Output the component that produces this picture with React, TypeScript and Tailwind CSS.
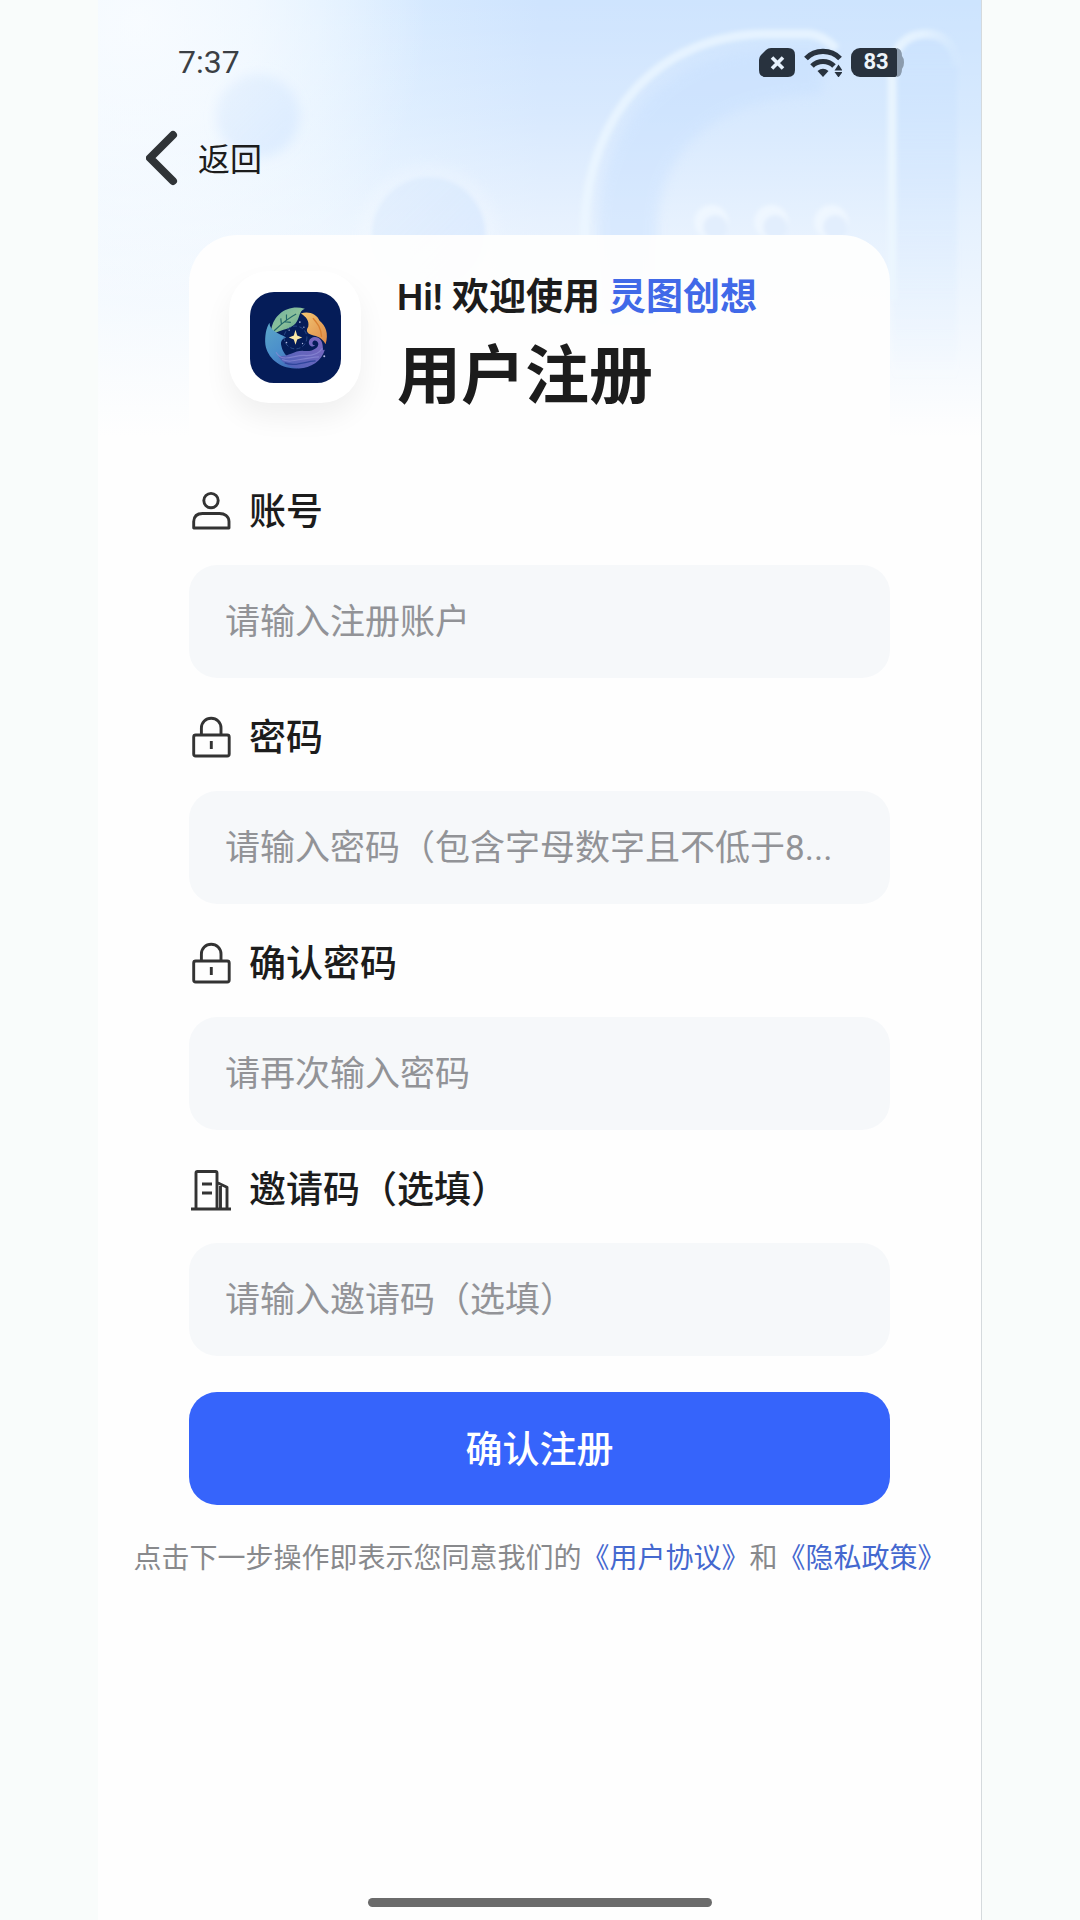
import { useState, type ReactNode } from 'react'

interface Field {
  id: string
  label: string
  placeholder: string
  type: string
  icon: ReactNode
}

const iconProps = {
  viewBox: '0 2 40 40',
  fill: 'none',
  stroke: '#333333',
  strokeWidth: 2.9,
  strokeLinejoin: 'round' as const,
  className: 'h-10 w-10 shrink-0 overflow-visible',
  'aria-hidden': true,
}

function UserIcon() {
  return (
    <svg {...iconProps}>
      <circle cx="20" cy="9.6" r="7.2" />
      <path d="M2.700 37V30.500C3 25 6.500 22.500 11.500 22.500h17C33.500 22.500 37.700 25 38 30.500V37Z" />
    </svg>
  )
}

function LockIcon() {
  return (
    <svg {...iconProps}>
      <rect x="2.700" y="18" width="35.500" height="21" rx="2" />
      <path d="M10.400 18V11a9.800 9.800 0 0 1 19.600 0v7M20.300 24v8" />
    </svg>
  )
}

function BuildingIcon() {
  return (
    <svg {...iconProps}>
      <path d="M0 40h40M5 40V4a1.500 1.500 0 0 1 1.500-1.500h18A1.500 1.500 0 0 1 26 4v36M26 13.500l10 4.700v21.800M29.500 17v22M11 15h10M11 24h10" />
    </svg>
  )
}

const fields: Field[] = [
  { id: 'account', label: '账号', placeholder: '请输入注册账户', type: 'text', icon: <UserIcon /> },
  {
    id: 'password',
    label: '密码',
    placeholder: '请输入密码（包含字母数字且不低于8...',
    type: 'password',
    icon: <LockIcon />,
  },
  { id: 'confirm', label: '确认密码', placeholder: '请再次输入密码', type: 'password', icon: <LockIcon /> },
  {
    id: 'invite',
    label: '邀请码（选填）',
    placeholder: '请输入邀请码（选填）',
    type: 'text',
    icon: <BuildingIcon />,
  },
]

function HeaderArt() {
  return (
    <svg
      className="absolute inset-x-0 top-0 h-[460px] w-full"
      viewBox="0 0 884 460"
      preserveAspectRatio="none"
      aria-hidden="true"
    >
      <defs>
        <linearGradient id="sky" x1="0" y1="0" x2="1" y2="0">
          <stop offset="0" stopColor="#e2f1ff" />
          <stop offset="0.25" stopColor="#dceeff" />
          <stop offset="0.5" stopColor="#cfe4fe" />
          <stop offset="1" stopColor="#cde4fe" />
        </linearGradient>
        <linearGradient id="fade" x1="0" y1="0" x2="0" y2="1">
          <stop offset="0" stopColor="#fefefe" stopOpacity="0" />
          <stop offset="0.25" stopColor="#fefefe" stopOpacity="0.2" />
          <stop offset="0.48" stopColor="#fefefe" stopOpacity="0.5" />
          <stop offset="0.7" stopColor="#fefefe" stopOpacity="0.72" />
          <stop offset="0.95" stopColor="#fefefe" />
        </linearGradient>
        <radialGradient id="corner" gradientUnits="userSpaceOnUse" cx="40" cy="20" r="290">
          <stop offset="0" stopColor="#fdfeff" stopOpacity="0.8" />
          <stop offset="0.4" stopColor="#fdfeff" stopOpacity="0.6" />
          <stop offset="1" stopColor="#fdfeff" stopOpacity="0" />
        </radialGradient>
        <linearGradient id="bubble" x1="0" y1="0" x2="1" y2="1">
          <stop offset="0" stopColor="#cfe3fb" stopOpacity="0.3" />
          <stop offset="1" stopColor="#c5deff" stopOpacity="0.45" />
        </linearGradient>
        <linearGradient id="pill" x1="0" y1="0" x2="0" y2="1">
          <stop offset="0" stopColor="#c9e1ff" stopOpacity="0.5" />
          <stop offset="1" stopColor="#c9e1ff" stopOpacity="0" />
        </linearGradient>
        <linearGradient id="pillEdge" x1="0" y1="0" x2="1" y2="0">
          <stop offset="0" stopColor="#ecf7ff" stopOpacity="0.85" />
          <stop offset="0.5" stopColor="#ecf7ff" stopOpacity="0.7" />
          <stop offset="1" stopColor="#ecf7ff" stopOpacity="0.1" />
        </linearGradient>
        <filter id="soft2" x="-20%" y="-20%" width="140%" height="140%">
          <feGaussianBlur stdDeviation="2" />
        </filter>
        <filter id="soft6" x="-20%" y="-20%" width="140%" height="140%">
          <feGaussianBlur stdDeviation="6" />
        </filter>
      </defs>
      <rect width="884" height="460" fill="url(#sky)" />
      <rect width="884" height="460" fill="url(#fade)" />
      <rect width="884" height="460" fill="url(#corner)" />
      <circle cx="160" cy="116" r="42" fill="url(#bubble)" filter="url(#soft6)" />
      <circle cx="331" cy="234" r="70" fill="#fff" opacity="0.15" filter="url(#soft6)" />
      <circle cx="331" cy="234" r="57" fill="url(#bubble)" filter="url(#soft2)" />
      <path
        d="M500 320V230C500 120 575 50 680 50H725V95C620 95 560 150 560 230V320Z"
        fill="#c4deff"
        opacity="0.4"
        filter="url(#soft6)"
      />
      <path
        d="M487 300V225C491 115 560 35 668 34H712Q726 35 739 49"
        fill="none"
        stroke="#ecf7ff"
        strokeOpacity="0.75"
        strokeWidth="9"
        filter="url(#soft2)"
      />
      <path d="M796 380V64a32 32 0 0 1 64 0V380Z" fill="url(#pill)" filter="url(#soft2)" />
      <path
        d="M795 300V72C795 45 812 34 829 34S858 45 860 66"
        fill="none"
        stroke="url(#pillEdge)"
        strokeWidth="9"
        filter="url(#soft2)"
      />
      {[614, 674, 734].map((x) => (
        <g key={x} filter="url(#soft2)">
          <circle cx={x} cy="222" r="17" fill="#eff7ff" />
          <circle cx={x + 4} cy="227" r="12" fill="#e2eefd" />
        </g>
      ))}
    </svg>
  )
}

function AppLogo() {
  return (
    <svg viewBox="0 0 272 272" className="h-[91px] w-[91px]" role="img" aria-label="灵图创想">
      <defs>
        <linearGradient id="leaf" x1="0" y1="0" x2="1" y2="1">
          <stop offset="0" stopColor="#6fb3a0" />
          <stop offset="0.5" stopColor="#8cc09a" />
          <stop offset="1" stopColor="#4e9a8a" />
        </linearGradient>
        <linearGradient id="flame" x1="0" y1="0" x2="1" y2="1">
          <stop offset="0" stopColor="#f3c673" />
          <stop offset="1" stopColor="#dd8a48" />
        </linearGradient>
        <linearGradient id="water" x1="0" y1="0" x2="0.7" y2="1">
          <stop offset="0" stopColor="#5ba6c8" />
          <stop offset="0.55" stopColor="#4b8fcb" />
          <stop offset="1" stopColor="#3f66b4" />
        </linearGradient>
        <linearGradient id="wave" x1="0" y1="1" x2="1" y2="0">
          <stop offset="0" stopColor="#4a62b8" />
          <stop offset="1" stopColor="#7f68c0" />
        </linearGradient>
      </defs>
      <rect width="272" height="272" rx="72" fill="#051c58" />
      <path d="M64 110C72 68 112 36 164 50C146 56 150 76 136 94C122 110 96 112 76 122C70 122 66 116 64 110Z" fill="url(#leaf)" />
      <path d="M72 116C94 96 108 82 138 66M94 97l-2-18M109 85l0-18M104 89l18 2" fill="none" stroke="#23686a" strokeWidth="3.500" />
      <path
        d="M152 64C176 56 200 66 208 86C226 100 236 124 226 156C218 142 208 134 190 130C170 126 166 116 174 104C178 86 168 74 152 64Z"
        fill="url(#flame)"
      />
      <path d="M188 78C200 92 212 104 214 134" fill="none" stroke="#d98032" strokeWidth="4" />
      <path
        d="M58 92C60 118 84 122 108 136C96 140 90 148 94 162C98 182 112 196 122 200C140 214 158 222 172 222C106 244 54 206 46 158C44 132 48 108 58 92Z"
        fill="url(#water)"
      />
      <path
        d="M84 190C112 198 130 174 160 176C188 180 206 166 204 154C202 144 190 142 187 150C185 157 191 161 195 158C190 168 174 162 176 148C180 132 202 130 212 144C222 160 214 180 224 172C214 208 176 232 138 228C112 222 92 208 84 190Z"
        fill="url(#wave)"
      />
      <path
        d="M78 180C98 216 138 184 168 190C192 190 208 182 216 168M96 202C124 214 148 198 206 194"
        fill="none"
        stroke="#8c8bd6"
        strokeOpacity="0.7"
        strokeWidth="3.500"
      />
      <path d="M104 212C136 224 160 208 196 206" fill="none" stroke="#2f459b" strokeWidth="4" />
      <circle cx="136" cy="136" r="34" fill="none" stroke="#31528f" strokeWidth="2.500" strokeDasharray="12 7" />
      <path d="M136 113L141 130L156 136L141 142L136 158L131 142L116 136L131 130Z" fill="#fbe7a6" />
      <g fill="#b4bce2">
        <circle cx="149" cy="90" r="2.500" />
        <circle cx="161" cy="105" r="2" />
        <circle cx="117" cy="114" r="2" />
        <circle cx="109" cy="151" r="2.500" />
        <circle cx="157" cy="154" r="2" />
        <circle cx="222" cy="192" r="3" />
      </g>
    </svg>
  )
}

function StatusBar() {
  return (
    <div className="flex h-[100px] items-center justify-between pt-6 pr-[77px] pl-20">
      <span className="text-[32px] leading-9 text-[#3b3f44]">7:37</span>
      <div className="flex items-center gap-[9px]">
        <svg viewBox="0 0 36 29" className="h-[29px] w-9" aria-hidden="true">
          <path d="M12 0H29Q36 0 36 7V22Q36 29 29 29H7Q0 29 0 22V12Q0 9 2 7L7 2Q9 0 12 0Z" fill="#28323e" />
          <path d="M13 9.500l11 11M24 9.500l-11 11" stroke="#e6f1fc" strokeWidth="3.600" />
        </svg>
        <svg viewBox="0 0 38 29" className="h-[29px] w-[38px]" aria-hidden="true">
          <path d="M2 10.500C11 1 27 1 36 10.500" fill="none" stroke="#28323e" strokeWidth="5.200" />
          <path d="M8 18C14 12 24 12 30 18" fill="none" stroke="#28323e" strokeWidth="5" />
          <path d="M13.500 23Q19 18.500 24.500 23L19 29Z" fill="#28323e" />
          <path d="M34.500 16.500L38.500 22.500H30.500ZM34.500 29.500L38.500 24H30.500Z" fill="#28323e" />
        </svg>
        <div className="flex items-center">
          <span className="flex h-[29px] w-[46px] items-center justify-center rounded-l-[9px] rounded-r-[2px] bg-[#28323e] pl-1 text-[22px] leading-none font-bold text-[#edf4fb]">
            83
          </span>
          <svg viewBox="0 0 7 29" className="h-[29px] w-[7px]" aria-hidden="true">
            <path d="M0 0Q5 1 5 8Q7 10 7 14.500T5 21Q5 28 0 29Z" fill="#8b9bad" />
          </svg>
        </div>
      </div>
    </div>
  )
}

export default function App() {
  const [values, setValues] = useState<Record<string, string>>({})

  return (
    <div
      lang="zh-CN"
      className="min-h-screen bg-[#f9fcfb] font-[Roboto,'Noto_Sans_CJK_SC',sans-serif] text-[#1c1c1c]"
    >
      <main className="relative mx-auto flex min-h-screen w-full max-w-[884px] flex-col overflow-hidden border-r border-[#d5dadd] bg-[#fefefe]">
        <HeaderArt />
        <div className="relative flex grow flex-col">
          <StatusBar />

          <nav className="flex h-[116px] items-center pl-12">
            <button type="button" className="flex items-center gap-5 text-[32px] leading-10">
              <svg viewBox="0 0 32 56" className="h-14 w-8" aria-hidden="true">
                <path d="M27 5L4 28L27 51" fill="none" stroke="#303437" strokeWidth="8" strokeLinecap="round" strokeLinejoin="round" />
              </svg>
              <span className="pt-1">返回</span>
            </button>
          </nav>

          <div className="flex flex-col px-[91px]">
            <header className="mt-[19px] mb-8 flex gap-9 rounded-t-[48px] bg-[#fefefe]/95 px-10 pt-9 pb-8">
              <div className="flex h-[132px] w-[132px] shrink-0 items-center justify-center rounded-[40px] bg-white shadow-[0_14px_28px_rgba(0,0,0,0.06)]">
                <AppLogo />
              </div>
              <div className="pt-0.5">
                <p className="text-[37px] leading-[50px] font-semibold">
                  Hi! 欢迎使用 <span className="text-[#4169e8]">灵图创想</span>
                </p>
                <h1 className="mt-[14px] text-[64px] leading-[80px] font-bold">用户注册</h1>
              </div>
            </header>

            <form className="flex flex-col" onSubmit={(e) => e.preventDefault()}>
              <div className="flex flex-col gap-[29px]">
                {fields.map((field) => (
                  <div key={field.id} className="flex flex-col gap-5">
                    <label
                      htmlFor={field.id}
                      className="flex h-16 items-center gap-[18px] pl-0.5 text-[37px] leading-[50px] font-medium"
                    >
                      {field.icon}
                      {field.label}
                    </label>
                    <input
                      id={field.id}
                      type={field.type}
                      placeholder={field.placeholder}
                      value={values[field.id] ?? ''}
                      onChange={(e) => setValues({ ...values, [field.id]: e.target.value })}
                      className="h-[113px] w-full rounded-[28px] bg-[#f6f8fa] px-9 pt-0.5 text-[35px] outline-none placeholder:text-[#929397]"
                    />
                  </div>
                ))}
              </div>
              <button
                type="submit"
                className="mt-9 h-[113px] rounded-[28px] bg-[#3664fb] pt-1 text-[37px] leading-[50px] font-medium text-white"
              >
                确认注册
              </button>
            </form>
          </div>

          <p className="mt-8 text-center text-[28px] leading-[44px] text-[#88898c]">
            点击下一步操作即表示您同意我们的
            <a href="#terms" className="text-[#4468cf]">《用户协议》</a>
            和
            <a href="#privacy" className="text-[#4468cf]">《隐私政策》</a>
          </p>

          <div className="mt-auto flex justify-center pt-16 pb-[13px]">
            <div className="h-[9px] w-[344px] rounded-full bg-[#6b6b6b]" />
          </div>
        </div>
      </main>
    </div>
  )
}
